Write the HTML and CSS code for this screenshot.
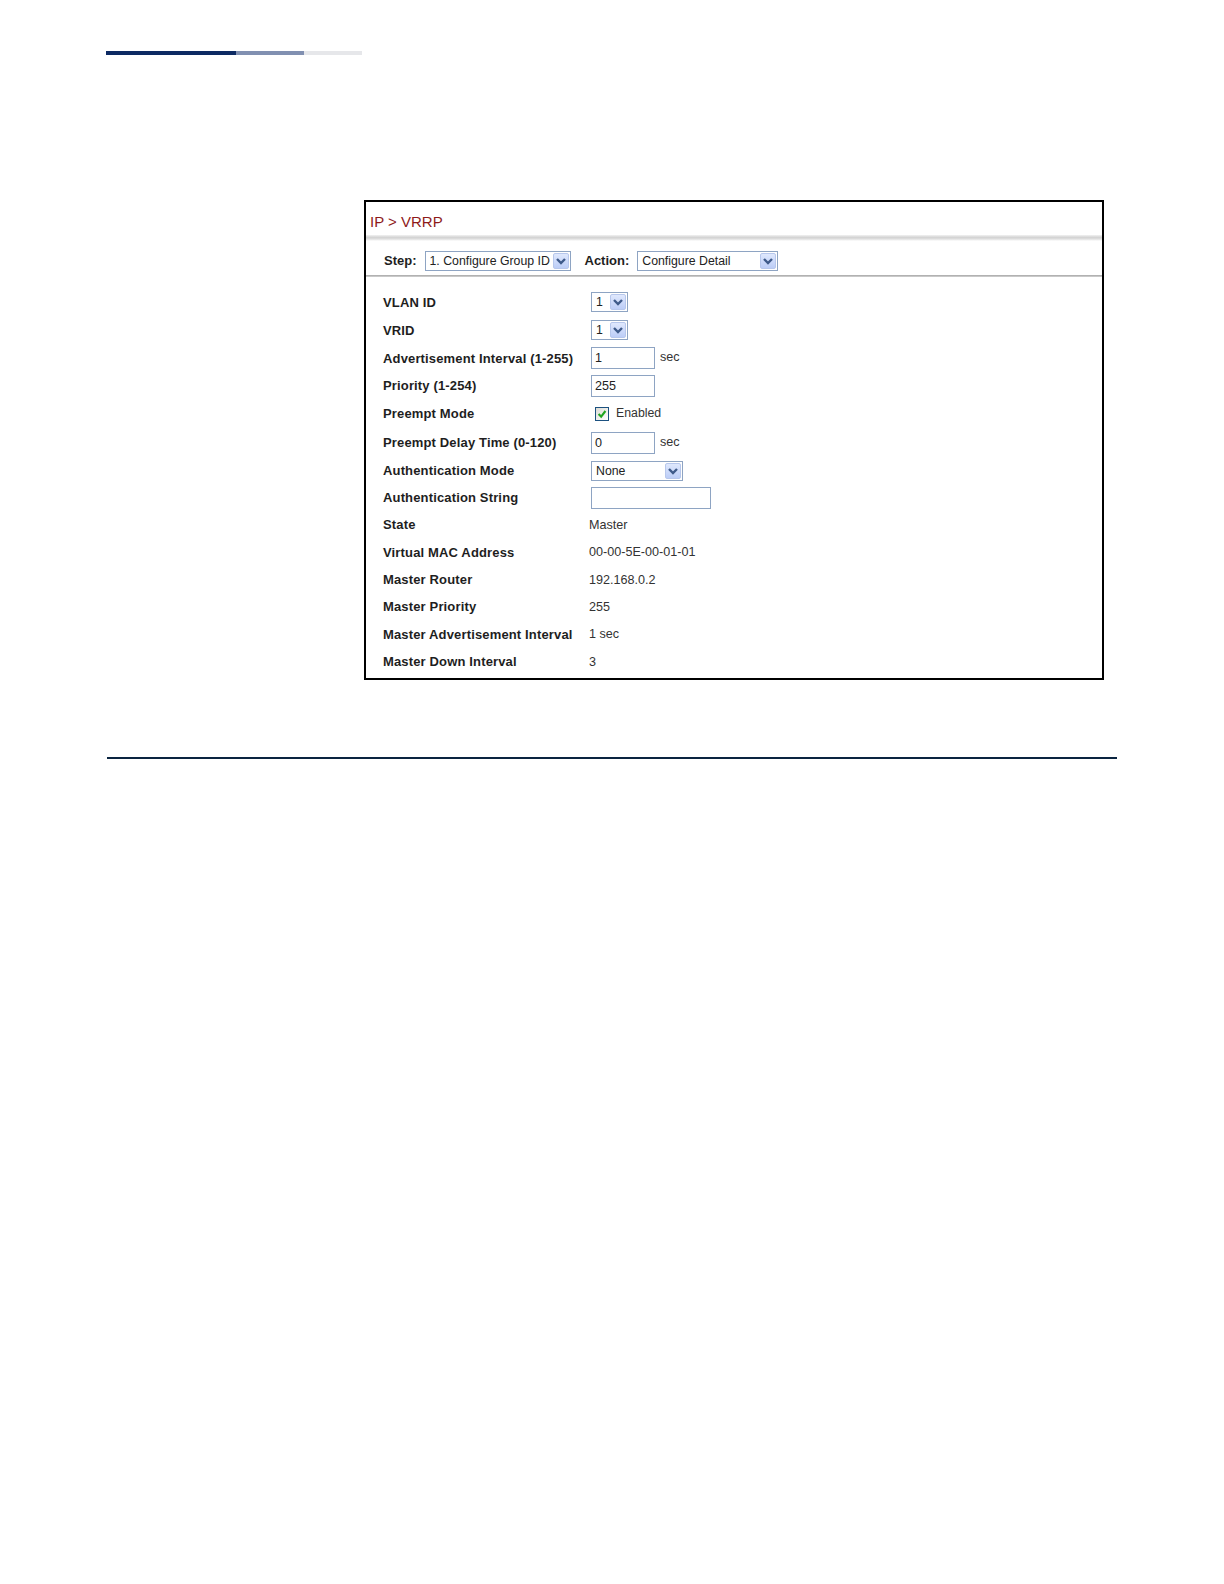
FILE: index.html
```html
<!DOCTYPE html>
<html>
<head>
<meta charset="utf-8">
<link rel="stylesheet" href="styles.css">
</head>
<body>
<div class="page">
  <div class="topbar">
    <span class="seg seg1"></span><span class="seg seg2"></span><span class="seg seg3"></span>
  </div>

  <div class="figure">
    <div class="title">IP &gt; VRRP</div>
    <div class="title-rule"></div>
    <div class="step-row">
      <span class="step-label">Step:</span>
      <div class="sel sel-step"><span class="sel-text">1. Configure Group ID</span><span class="arrow"><svg viewBox="0 0 14 14" width="14" height="14"><path d="M3 5 L7 9 L11 5" fill="none" stroke="#3e5a8a" stroke-width="2.4"/></svg></span></div>
      <span class="step-label action-label">Action:</span>
      <div class="sel sel-action"><span class="sel-text">Configure Detail</span><span class="arrow"><svg viewBox="0 0 14 14" width="14" height="14"><path d="M3 5 L7 9 L11 5" fill="none" stroke="#3e5a8a" stroke-width="2.4"/></svg></span></div>
    </div>
    <div class="step-rule"></div>

    <div class="form">
      <div class="row h28"><span class="label">VLAN ID</span><div class="val"><div class="sel sel-small"><span class="sel-text">1</span><span class="arrow"><svg viewBox="0 0 14 14" width="14" height="14"><path d="M3 5 L7 9 L11 5" fill="none" stroke="#3e5a8a" stroke-width="2.4"/></svg></span></div></div></div>
      <div class="row h28"><span class="label">VRID</span><div class="val"><div class="sel sel-small"><span class="sel-text">1</span><span class="arrow"><svg viewBox="0 0 14 14" width="14" height="14"><path d="M3 5 L7 9 L11 5" fill="none" stroke="#3e5a8a" stroke-width="2.4"/></svg></span></div></div></div>
      <div class="row h28"><span class="label">Advertisement Interval (1-255)</span><div class="val"><div class="input">1</div><span class="unit">sec</span></div></div>
      <div class="row h27"><span class="label">Priority (1-254)</span><div class="val"><div class="input">255</div></div></div>
      <div class="row h29"><span class="label">Preempt Mode</span><div class="val"><span class="check"><svg viewBox="0 0 14 14" width="12" height="12"><path d="M3 7 L6 10 L11 3.5" fill="none" stroke="#1fa51f" stroke-width="2.4"/></svg></span><span class="check-text">Enabled</span></div></div>
      <div class="row h29"><span class="label">Preempt Delay Time (0-120)</span><div class="val"><div class="input">0</div><span class="unit">sec</span></div></div>
      <div class="row h27"><span class="label">Authentication Mode</span><div class="val"><div class="sel sel-auth"><span class="sel-text">None</span><span class="arrow"><svg viewBox="0 0 14 14" width="14" height="14"><path d="M3 5 L7 9 L11 5" fill="none" stroke="#3e5a8a" stroke-width="2.4"/></svg></span></div></div></div>
      <div class="row h27"><span class="label">Authentication String</span><div class="val"><div class="input input-wide"></div></div></div>
      <div class="row h27"><span class="label">State</span><div class="val text">Master</div></div>
      <div class="row h28"><span class="label">Virtual MAC Address</span><div class="val text">00-00-5E-00-01-01</div></div>
      <div class="row h27"><span class="label">Master Router</span><div class="val text">192.168.0.2</div></div>
      <div class="row h27"><span class="label">Master Priority</span><div class="val text">255</div></div>
      <div class="row h28"><span class="label">Master Advertisement Interval</span><div class="val text">1 sec</div></div>
      <div class="row h27"><span class="label">Master Down Interval</span><div class="val text">3</div></div>
    </div>
  </div>

  <div class="bottom-rule"></div>
</div>
</body>
</html>
```
FILE: styles.css
```css
html, body {
  margin: 0;
  padding: 0;
  background: #ffffff;
}
body {
  width: 1224px;
  height: 1584px;
  font-family: "Liberation Sans", Arial, sans-serif;
}
.page {
  padding-top: 51px;
}
.topbar {
  display: flex;
  margin-left: 106px;
  height: 4px;
}
.seg { display: block; height: 4px; }
.seg1 { width: 130px; background: #0d2a63; }
.seg2 { width: 68px; background: #8190b1; }
.seg3 { width: 58px; background: #e6e7ea; }

.figure {
  margin-top: 145px;
  margin-left: 364px;
  width: 740px;
  height: 480px;
  box-sizing: border-box;
  border: 2px solid #000;
  background: #fff;
}
.title {
  height: 33px;
  padding-left: 4px;
  box-sizing: border-box;
  padding-top: 11px;
  font-size: 15px;
  line-height: 17px;
  color: #8e1a1a;
}
.title-rule {
  height: 6px;
  background: linear-gradient(#f2f2f2, #d3d3d3 40%, #dedede 65%, #ffffff);
}
.step-row {
  height: 34px;
  display: flex;
  align-items: center;
  padding-left: 18px;
  box-sizing: border-box;
  padding-top: 5px;
}
.step-label {
  font-size: 13px;
  font-weight: bold;
  color: #1e1e1e;
  margin-right: 8px;
}
.action-label {
  margin-left: 14px;
  margin-right: 8px;
}
.step-rule {
  height: 2px;
  background: linear-gradient(#a6a6a6, #d4d4d4);
}

.sel {
  display: flex;
  align-items: center;
  justify-content: space-between;
  height: 20px;
  box-sizing: border-box;
  border: 1px solid #8ea4c3;
  background: #fff;
  padding-left: 4px;
  padding-right: 1px;
  font-size: 12.3px;
  color: #222;
}
.sel-text { white-space: nowrap; }
.arrow {
  display: flex;
  align-items: center;
  justify-content: center;
  width: 16px;
  height: 16px;
  box-sizing: border-box;
  border: 1px solid #b7c7ec;
  background: linear-gradient(#dfe8fd, #bccdf7);
  border-radius: 2px;
}
.sel-step { width: 146px; }
.sel-action { width: 141px; }
.sel-small { width: 37px; }
.sel-auth { width: 92px; }

.form {
  padding-top: 11px;
}
.row {
  display: flex;
  align-items: center;
  padding-left: 17px;
}
.h27 { height: 27px; }
.h28 { height: 28px; }
.h29 { height: 29px; }
.label {
  width: 208px;
  font-size: 13px;
  font-weight: bold;
  letter-spacing: 0.15px;
  color: #1e1e1e;
  white-space: nowrap;
}
.val {
  display: flex;
  align-items: center;
  font-size: 12.6px;
  color: #333;
}
.val.text {
  margin-left: -2px;
}
.input {
  width: 64px;
  height: 22px;
  box-sizing: border-box;
  border: 1px solid #8ea4c3;
  padding-left: 3px;
  font-size: 12.6px;
  line-height: 20px;
  color: #222;
}
.input-wide { width: 120px; }
.unit {
  margin-left: 5px;
  color: #333;
  margin-top: -2px;
}
.check {
  display: inline-flex;
  width: 14px;
  height: 14px;
  box-sizing: border-box;
  border: 1px solid #1c5180;
  background: linear-gradient(135deg, #dcdcd5, #ffffff);
  margin-left: 4px;
  align-items: center;
  justify-content: center;
}
.check svg { display: block; }
.check-text {
  margin-left: 7px;
  margin-top: -2px;
  font-size: 12.3px;
  color: #333;
}

.bottom-rule {
  margin-top: 77px;
  margin-left: 107px;
  width: 1010px;
  height: 2px;
  background: #0a2440;
}
```
